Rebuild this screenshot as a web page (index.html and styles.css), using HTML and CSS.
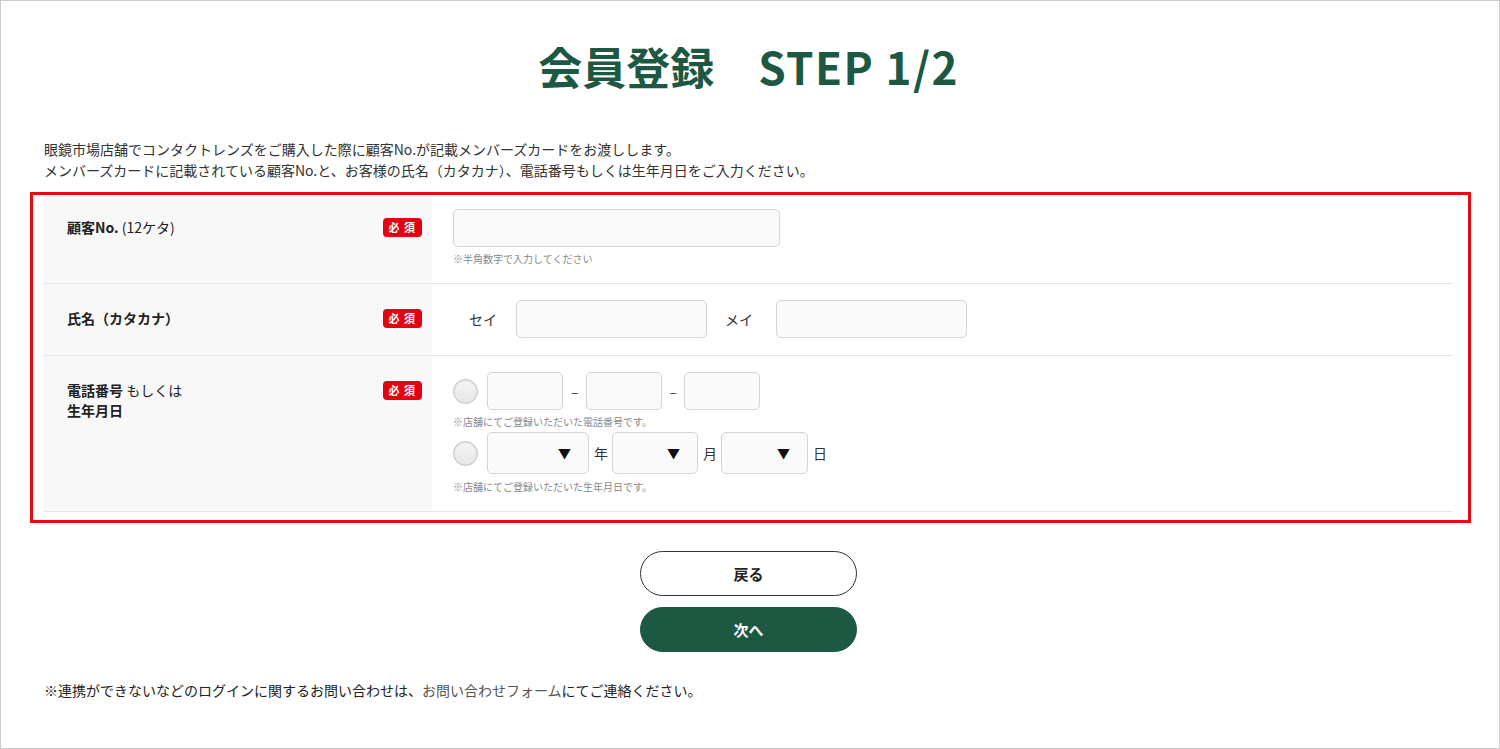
FILE: index.html
```html
<!DOCTYPE html>
<html lang="ja">
<head>
  <meta charset="UTF-8">
  <meta name="viewport" content="width=device-width, initial-scale=1.0">
  <title>会員登録 STEP 1/2</title>
  <link rel="stylesheet" href="styles.css">
</head>
<body>
  <div class="page">
    <h1 class="title">会員登録　<span class="title-step">STEP 1/2</span></h1>

    <p class="lead">
      眼鏡市場店舗でコンタクトレンズをご購入した際に顧客No.が記載メンバーズカードをお渡しします。<br>
      メンバーズカードに記載されている顧客No.と、お客様の氏名（カタカナ）、電話番号もしくは生年月日をご入力ください。
    </p>

    <div class="highlight">
      <div class="form">
        <!-- customer number -->
        <div class="row">
          <div class="row-label row-label-top">
            <span><b>顧客No.</b> (12ケタ)</span>
            <span class="badge">必 須</span>
          </div>
          <div class="row-field row-field-top">
            <input type="text" class="text text-wide">
            <p class="note">※半角数字で入力してください</p>
          </div>
        </div>

        <!-- name -->
        <div class="row">
          <div class="row-label">
            <span><b>氏名（カタカナ）</b></span>
            <span class="badge">必 須</span>
          </div>
          <div class="row-field">
            <div class="line">
              <span class="name-label">セイ</span>
              <input type="text" class="text text-name">
              <span class="name-label name-label-mei">メイ</span>
              <input type="text" class="text text-name">
            </div>
          </div>
        </div>

        <!-- phone or birthday -->
        <div class="row">
          <div class="row-label">
            <span><b>電話番号</b> もしくは<br><b>生年月日</b></span>
            <span class="badge">必 須</span>
          </div>
          <div class="row-field">
            <div class="line">
              <input type="radio" name="type" class="radio">
              <input type="text" class="text text-tel">
              <span class="dash">–</span>
              <input type="text" class="text text-tel">
              <span class="dash">–</span>
              <input type="text" class="text text-tel">
            </div>
            <p class="note">※店舗にてご登録いただいた電話番号です。</p>
            <div class="line line-date">
              <input type="radio" name="type" class="radio">
              <span class="select select-year"><select></select></span>
              <span class="unit">年</span>
              <span class="select"><select></select></span>
              <span class="unit">月</span>
              <span class="select select-day"><select></select></span>
              <span class="unit">日</span>
            </div>
            <p class="note note-last">※店舗にてご登録いただいた生年月日です。</p>
          </div>
        </div>
      </div>
    </div>

    <div class="buttons">
      <button class="btn btn-back">戻る</button>
      <button class="btn btn-next">次へ</button>
    </div>

    <p class="footnote">※連携ができないなどのログインに関するお問い合わせは、<a href="#">お問い合わせフォーム</a>にてご連絡ください。</p>
  </div>
</body>
</html>
```

FILE: styles.css
```css
* {
  margin: 0;
  padding: 0;
  box-sizing: border-box;
}
body {
  font-family: "Noto Sans CJK JP", "Noto Sans", sans-serif;
  font-size: 14px;
  color: #333;
  background: #fff;
}
.page {
  width: 1500px;
  height: 749px;
  border: 1px solid #cccccc;
  padding: 0 46px 0 43px;
}
.title {
  margin-top: 32px;
  text-align: center;
  font-size: 44px;
  line-height: 66px;
  font-weight: 700;
  color: #1d5843;
}
.title-step {
  letter-spacing: 1.4px;
}
.lead {
  margin-top: 40px;
  line-height: 21px;
}

/* red frame round the form */
.highlight {
  margin: 11px -18px 0 -14px;
  border: 3px solid #e10f13;
  padding: 1px 15px 8px 11px;
}
.row {
  display: grid;
  grid-template-columns: 388px 1fr;
  border-bottom: 1px solid #e6e6e6;
}
.row-label {
  background: #f8f8f8;
  display: flex;
  justify-content: space-between;
  align-items: flex-start;
  padding: 24px 10px 0 23px;
  line-height: 20px;
  color: #222;
}
.row-label-top {
  padding-top: 21px;
}
.badge {
  margin-top: 1px;
  background: #e50012;
  color: #fff;
  font-size: 11px;
  font-weight: 700;
  line-height: 19px;
  padding: 0 6px;
  border-radius: 4px;
  letter-spacing: 1px;
}
.row-field {
  padding: 16px 0 17px 21px;
}
.row-field-top {
  padding-top: 13px;
}
.line {
  display: flex;
  align-items: center;
}
.line-date {
  margin-top: 3px;
}
.text {
  height: 38px;
  border: 1px solid #d4d4d4;
  border-radius: 5px;
  background: #fafafa;
  font: inherit;
  padding: 0 8px;
}
.text-wide {
  width: 327px;
}
.text-name {
  width: 191px;
}
.text-tel {
  width: 76px;
}
.name-label {
  margin: 0 19px 0 16px;
  color: #333;
}
.name-label-mei {
  margin: 0 23px 0 18px;
}
.dash {
  margin: 0 7px 0 8px;
  color: #444;
}
.radio {
  appearance: none;
  width: 25px;
  height: 25px;
  border-radius: 50%;
  border: 1px solid #c0c0c0;
  background: linear-gradient(#f6f6f6, #e6e6e6);
  box-shadow: inset 0 1px 2px rgba(0, 0, 0, 0.1);
  margin-right: 9px;
}
.select {
  position: relative;
  display: block;
}
.select select {
  appearance: none;
  display: block;
  width: 86px;
  height: 42px;
  border: 1px solid #d4d4d4;
  border-radius: 5px;
  background: #fafafa;
}
.select-year select {
  width: 102px;
}
.select-day select {
  width: 87px;
}
.select::after {
  content: "▼";
  position: absolute;
  right: 18px;
  top: 11px;
  font-size: 13px;
  line-height: 20px;
  color: #111;
  pointer-events: none;
}
.unit {
  margin: 0 4px 0 5px;
  color: #333;
}
.note {
  margin-top: 4px;
  font-size: 10px;
  line-height: 15px;
  color: #888;
}
.note-last {
  margin-top: 5px;
}

/* buttons */
.buttons {
  margin-top: 28px;
  display: flex;
  flex-direction: column;
  align-items: center;
  gap: 11px;
}
.btn {
  width: 217px;
  height: 45px;
  border-radius: 23px;
  font: inherit;
  font-weight: 700;
  font-size: 15px;
}
.btn-back {
  background: #fff;
  border: 1px solid #333;
  color: #222;
}
.btn-next {
  background: #1d5843;
  border: 1px solid #1d5843;
  color: #fff;
}
.footnote {
  margin-top: 28px;
  line-height: 21px;
  color: #222;
}
.footnote a {
  color: #555;
  text-decoration: none;
}
```
